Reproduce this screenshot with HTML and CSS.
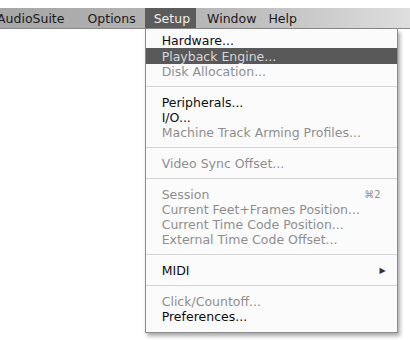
FILE: index.html
```html
<!DOCTYPE html>
<html lang="en">
<head>
    <meta charset="UTF-8">
    <title>Setup menu</title>
    <link rel="stylesheet" href="styles.css">
</head>
<body>
<div class="screen">
    <div class="menubar">
        <span class="menu-title first">AudioSuite</span>
        <span class="menu-title">Options</span>
        <div class="menu-open">
            <span class="menu-title active">Setup</span>
            <ul class="dropdown">
                <li class="item">Hardware...</li>
                <li class="item selected">Playback Engine...</li>
                <li class="item off">Disk Allocation...</li>
                <li class="sep"></li>
                <li class="item">Peripherals...</li>
                <li class="item">I/O...</li>
                <li class="item off">Machine Track Arming Profiles...</li>
                <li class="sep"></li>
                <li class="item off">Video Sync Offset...</li>
                <li class="sep"></li>
                <li class="item off">Session <span class="key">⌘2</span></li>
                <li class="item off">Current Feet+Frames Position...</li>
                <li class="item off">Current Time Code Position...</li>
                <li class="item off">External Time Code Offset...</li>
                <li class="sep"></li>
                <li class="item">MIDI <span class="arrow">▶</span></li>
                <li class="sep"></li>
                <li class="item off">Click/Countoff...</li>
                <li class="item">Preferences...</li>
            </ul>
        </div>
        <span class="menu-title window">Window</span>
        <span class="menu-title">Help</span>
    </div>
</div>
</body>
</html>
```

FILE: styles.css
```css
body {
    margin: 0;
    background: #fff;
    font-family: "DejaVu Sans", "Liberation Sans", sans-serif;
}

.screen {
    width: 410px;
    height: 340px;
    padding-top: 8px;
    box-sizing: border-box;
    overflow: hidden;
}

.menubar {
    display: flex;
    height: 20px;
    align-items: stretch;
    background: linear-gradient(to right, #a6a6a6, #b9b9b9 55%, #dedede);
    border-bottom: 1px solid #8a8a8a;
    font-size: 12.5px;
    color: #1a1a1a;
}

.menu-title {
    display: flex;
    align-items: center;
    padding: 0 6px;
}

.menu-title.first {
    margin-left: -9px;
    padding-right: 17px;
}

.menu-title.window {
    padding-left: 11px;
}

.menu-open {
    position: relative;
    display: flex;
    margin-left: 3px;
}

.menu-title.active {
    background: #5c5c5c;
    color: #eeeeee;
    padding: 0 6px 0 9px;
}

.dropdown {
    position: absolute;
    top: 21px;
    left: 0;
    width: 251px;
    margin: 0;
    padding: 4px 0 8px;
    list-style: none;
    background: #fbfbfb;
    border: 1px solid #8c8c8c;
    border-top: none;
    box-shadow: 2px 3px 4px rgba(0, 0, 0, 0.35);
    font-size: 12.5px;
}

.item {
    display: flex;
    justify-content: space-between;
    align-items: center;
    height: 15px;
    padding: 0 14px 0 16px;
    color: #0c0c0c;
    white-space: nowrap;
}

.item.off {
    color: #8e8e8e;
}

.item.selected {
    background: #595959;
    color: #d6d6d6;
    height: 16px;
}

.sep {
    height: 1px;
    margin: 7px 0 8px;
    background: #d4d4d4;
}

.key {
    font-size: 10px;
    padding-right: 2px;
}

.arrow {
    font-size: 8px;
    color: #333;
    margin-right: -3px;
}
```
